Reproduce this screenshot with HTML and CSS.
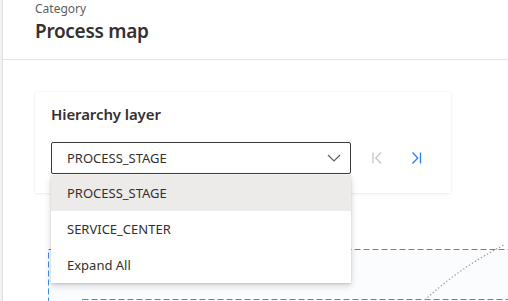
FILE: index.html
```html
<!DOCTYPE html>
<html lang="en">
<head>
  <meta charset="UTF-8" />
  <meta name="viewport" content="width=device-width, initial-scale=1.0"/>
  <title>Process map</title>
  <link rel="stylesheet" href="styles.css">
</head>
<body>
  <div class="app">
    <div class="rail"></div>

    <main class="main">
      <!-- page header -->
      <header class="header">
        <div class="eyebrow">Category</div>
        <h1 class="title">Process map</h1>
      </header>

      <div class="content">
        <!-- hierarchy card -->
        <section class="card">
          <h2 class="card-title">Hierarchy layer</h2>
          <div class="row">
            <div class="dropdown">
              <button class="dropdown-field">
                <span>PROCESS_STAGE</span>
                <svg class="chevron" width="14" height="8" viewBox="0 0 14 8">
                  <polyline points="1,1 7,7 13,1" fill="none" stroke="#605e5c" stroke-width="1.2"/>
                </svg>
              </button>
              <ul class="menu">
                <li class="menu-item selected">PROCESS_STAGE</li>
                <li class="menu-item">SERVICE_CENTER</li>
                <li class="menu-item">Expand All</li>
              </ul>
            </div>
            <button class="nav-btn disabled" title="First">
              <svg width="12" height="12" viewBox="0 0 12 12">
                <line x1="1" y1="0.5" x2="1" y2="11.5" stroke="currentColor" stroke-width="1.3"/>
                <polyline points="9,0.5 3.7,6 9,11.5" fill="none" stroke="currentColor" stroke-width="1.3"/>
              </svg>
            </button>
            <button class="nav-btn" title="Last">
              <svg width="12" height="12" viewBox="0 0 12 12">
                <polyline points="2.5,0.5 7.8,6 2.5,11.5" fill="none" stroke="currentColor" stroke-width="1.3"/>
                <line x1="10.5" y1="0.5" x2="10.5" y2="11.5" stroke="currentColor" stroke-width="1.3"/>
              </svg>
            </button>
          </div>
        </section>

        <!-- diagram canvas -->
        <div class="canvas">
          <svg width="473" height="56" viewBox="0 0 473 56">
            <rect x="13.5" y="4.5" width="600" height="120" fill="#fafcfe" stroke="#3a8ee6" stroke-dasharray="6 3"/>
            <rect x="47.5" y="54.5" width="600" height="80" fill="#fafcfe" stroke="#3a8ee6" stroke-dasharray="6 3"/>
            <path d="M390 55 Q425 22 473 -2" fill="none" stroke="#a19f9d" stroke-width="1.2" stroke-dasharray="1.5 2"/>
          </svg>
        </div>
      </div>
    </main>
  </div>
</body>
</html>
```

FILE: styles.css
```css
body {
  margin: 0;
  font-family: "Noto Sans", "Liberation Sans", sans-serif;
  background: #ffffff;
  color: #323130;
  overflow: hidden;
}

.app {
  display: flex;
  height: 301px;
}

/* thin left rail */
.rail {
  width: 2px;
  flex-shrink: 0;
  background: #f3f2f1;
  border-right: 1px solid #e1dfdd;
}

.main {
  flex: 1;
  min-width: 0;
}

/* header */
.header {
  padding: 1px 32px 14px;
  border-bottom: 1px solid #e6e6e6;
}
.eyebrow {
  font-size: 12px;
  line-height: 16px;
  color: #605e5c;
}
.title {
  margin: 0;
  font-size: 19px;
  line-height: 28px;
  font-weight: 600;
  letter-spacing: -0.3px;
  color: #323130;
}

.content {
  padding: 32px 0 0 32px;
}

/* card */
.card {
  width: 384px;
  padding: 11px 16px 19px;
  background: #fff;
  box-shadow: 0 0 1px rgba(0,0,0,0.12), 0 1px 3px rgba(0,0,0,0.06);
}
.card-title {
  margin: 0 0 17px;
  font-size: 15px;
  line-height: 22px;
  font-weight: 600;
  letter-spacing: -0.1px;
  color: #323130;
}

.row {
  display: flex;
  align-items: center;
}

/* dropdown */
.dropdown {
  position: relative;
  width: 300px;
}
.dropdown-field {
  display: flex;
  align-items: center;
  justify-content: space-between;
  width: 100%;
  height: 32px;
  padding: 0 9px 0 15px;
  border: 1px solid #3b3a39;
  border-radius: 2px;
  background: #fff;
  font-family: inherit;
  font-size: 13px;
  color: #323130;
  box-sizing: border-box;
}
.chevron {
  display: block;
}

.menu {
  position: absolute;
  top: 33px;
  left: 0;
  right: 0;
  margin: 0;
  padding: 0;
  list-style: none;
  background: #fff;
  box-shadow: 0 3px 7px rgba(0,0,0,0.16), 0 1px 2px rgba(0,0,0,0.12);
  z-index: 10;
}
.menu-item {
  height: 36px;
  line-height: 36px;
  padding-left: 16px;
  font-size: 13px;
  color: #323130;
}
.menu-item.selected {
  background: #edebe9;
}

/* pager buttons */
.nav-btn {
  width: 32px;
  height: 32px;
  margin-left: 6px;
  padding: 0;
  border: none;
  background: none;
  color: #2b7de9;
  display: flex;
  align-items: center;
  justify-content: center;
}
.nav-btn.disabled {
  margin-left: 11px;
  color: #c8c6c4;
}

/* canvas */
.canvas {
  margin-top: 52px;
}
.canvas svg {
  display: block;
}
```
